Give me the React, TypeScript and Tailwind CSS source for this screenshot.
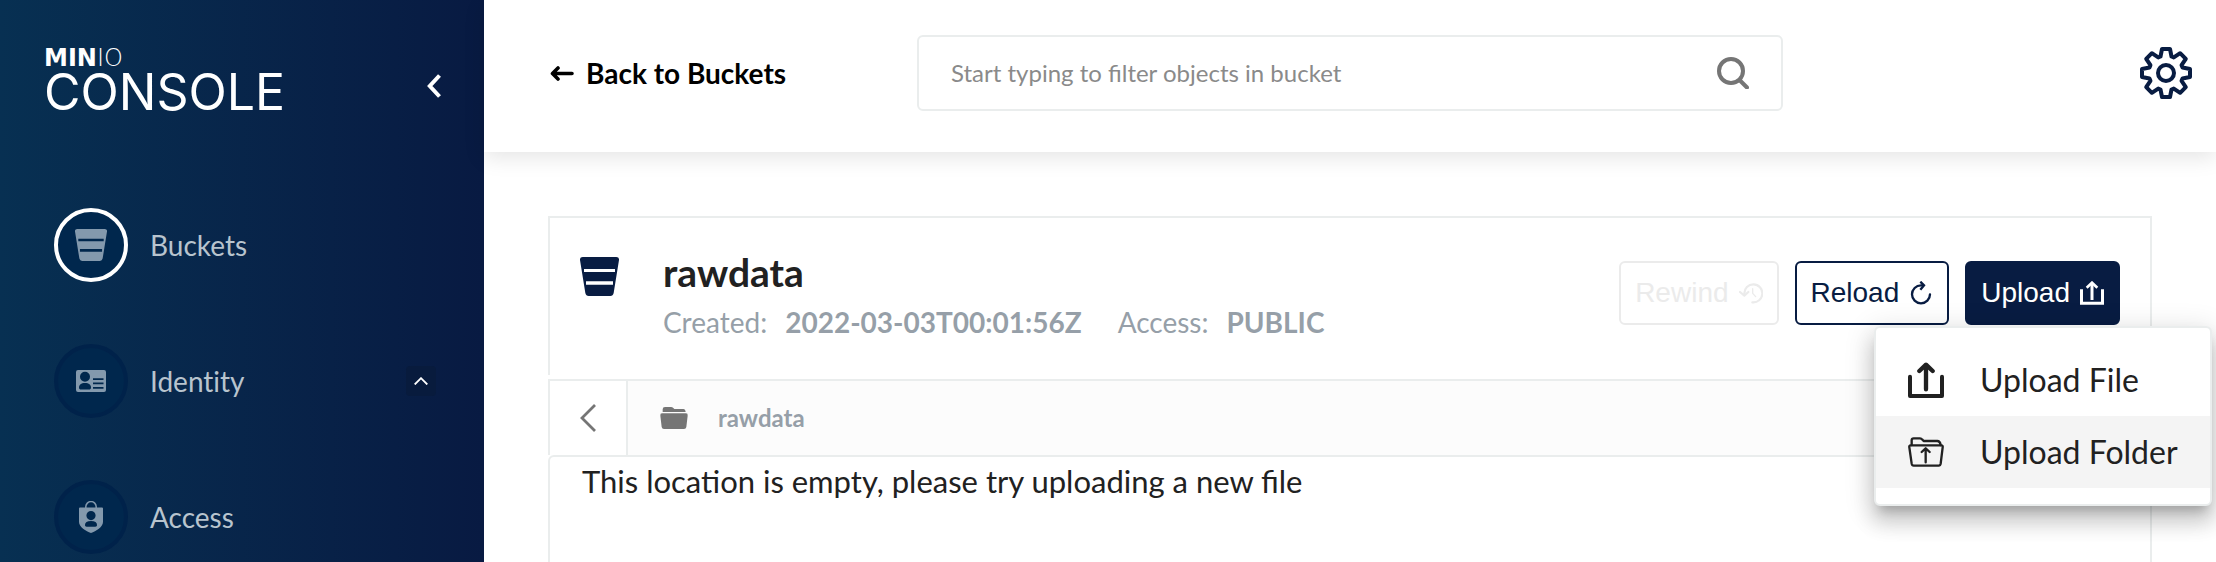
import React from "react";

type IconProps = { className: string };

function BucketIcon({ className }: IconProps) {
  return (
    <svg viewBox="0 0 117 117" className={`block shrink-0 ${className}`} fill="currentColor" aria-hidden="true">
      <path
        fillRule="evenodd"
        d="M8 0H109Q118 0 117 9L101 108Q99 117 91 117H26Q18 117 16 108L0 9Q-1 0 8 0ZM12 36V45H105V36ZM18 73V83H99V73Z"
      />
    </svg>
  );
}

function IdentityIcon({ className }: IconProps) {
  return (
    <svg viewBox="0 0 30 22" className={`block shrink-0 ${className}`} fill="currentColor" aria-hidden="true">
      <path
        fillRule="evenodd"
        d="M2 0h26a2 2 0 0 1 2 2v18a2 2 0 0 1-2 2H2a2 2 0 0 1-2-2V2a2 2 0 0 1 2-2zM9 1.800a5 5 0 1 0 0 10 5 5 0 0 0 0-10zM9 13c-4 0-6 2-6 4.500 0 1.500.8 2 2 2h8c1.200 0 2-.5 2-2C15 15 13 13 9 13zM17 8.300v1.700h10.500V8.300zM17 12.600v1.700h10.500v-1.700zM17 17v1.700h10.500V17z"
      />
    </svg>
  );
}

function AccessIcon({ className }: IconProps) {
  return (
    <svg viewBox="0 0 24 32" className={`block shrink-0 ${className}`} fill="currentColor" aria-hidden="true">
      <path
        fillRule="evenodd"
        d="M1 6.500h22a1 1 0 0 1 1 1V21c0 5-7 9-12 11C7 30 0 26 0 21V7.500a1 1 0 0 1 1-1zM12 10a4.600 4.600 0 1 0 0 9.200 4.600 4.600 0 0 0 0-9.200zM12 20c-4 0-6 1.600-6 4 0 1.300.6 1.700 1.700 1.700h8.600c1.100 0 1.700-.4 1.700-1.700 0-2.400-2-4-6-4z"
      />
      <path d="M6.800 7V5.800a5.200 5.200 0 0 1 10.400 0V7" fill="none" stroke="currentColor" strokeWidth="1.500" />
    </svg>
  );
}

const gearPoints = Array.from({ length: 8 }, (_, i) => {
  const a = (i * Math.PI) / 4;
  const tooth = [
    [-5.5, -16.5],
    [-4, -24],
    [4, -24],
    [5.5, -16.5],
  ];
  return tooth
    .map(([x, y]) => `${(26 + x * Math.cos(a) - y * Math.sin(a)).toFixed(2)},${(26 + x * Math.sin(a) + y * Math.cos(a)).toFixed(2)}`)
    .join(" ");
}).join(" ");

function GearIcon({ className }: IconProps) {
  return (
    <svg viewBox="0 0 52 52" className={`block ${className}`} fill="none" stroke="currentColor" strokeWidth="4" strokeLinejoin="round" aria-hidden="true">
      <circle cx="26" cy="26" r="8" />
      <polygon points={gearPoints} />
    </svg>
  );
}

function RewindIcon({ className }: IconProps) {
  return (
    <svg viewBox="0 0 72 72" className={`block shrink-0 ${className}`} fill="none" stroke="currentColor" strokeWidth="6.500" strokeLinecap="round" aria-hidden="true">
      <path d="M16 38A27 27 0 1 1 40 64" />
      <path d="M3 33 16 44 28 33" strokeLinejoin="round" />
      <path d="M41 23V37L50 47" strokeWidth="4" />
    </svg>
  );
}

function ReloadIcon({ className }: IconProps) {
  return (
    <svg viewBox="0 0 72 72" className={`block shrink-0 ${className}`} fill="none" stroke="currentColor" strokeWidth="7" aria-hidden="true">
      <path d="M42 13H36A27 27 0 1 0 63 40" strokeLinecap="round" />
      <path d="M34 2 45 13 34 26" />
    </svg>
  );
}

function UploadIcon({ className }: IconProps) {
  return (
    <svg viewBox="0 0 72 72" className={`block shrink-0 ${className}`} fill="none" stroke="currentColor" aria-hidden="true">
      <path d="M4.500 25V67H67.500V25" strokeWidth="9" />
      <path d="M36 57V6" strokeWidth="9" />
      <path d="M20 20 36 5 52 20" strokeWidth="8" />
    </svg>
  );
}

function UploadFileIcon({ className }: IconProps) {
  return (
    <svg viewBox="0 0 108 108" className={`block shrink-0 ${className}`} fill="none" stroke="currentColor" strokeWidth="12" strokeLinecap="round" strokeLinejoin="round" aria-hidden="true">
      <path d="M6 44V102H102V44" />
      <path d="M54 82V10M34 27 54 8 74 27" strokeWidth="13" />
    </svg>
  );
}

function UploadFolderIcon({ className }: IconProps) {
  return (
    <svg viewBox="0 0 108 90" className={`block shrink-0 ${className}`} fill="none" stroke="currentColor" strokeWidth="7" strokeLinecap="round" strokeLinejoin="round" aria-hidden="true">
      <path d="M11 24V10Q11 4 17 4H36Q40 4 43 8L47 12H88Q96 12 98 24" />
      <path d="M8 25H100Q105 25 104 31L98 80Q97 86 92 86H17Q12 86 11 80L4 31Q3 25 8 25Z" />
      <path d="M53 76V36M41 45 53 34 65 45" />
    </svg>
  );
}

function FolderIcon({ className }: IconProps) {
  return (
    <svg viewBox="0 0 84 66" className={`block shrink-0 ${className}`} fill="currentColor" aria-hidden="true">
      <path d="M8 15V7Q8 0 15 0H33Q37 0 40 3L43 6H70Q76 6 77 15Z" />
      <path d="M6 19H78Q84 19 83 26L79 60Q78 66 72 66H12Q6 66 5 60L1 26Q0 19 6 19Z" />
    </svg>
  );
}

type NavItemProps = { label: string; active?: boolean; open?: boolean; children: React.ReactNode };

function NavItem({ label, active, open, children }: NavItemProps) {
  return (
    <li>
      <a href="#" className="flex items-center">
        <span
          className={
            active
              ? "flex size-[74px] shrink-0 items-center justify-center rounded-full border-4 border-white bg-[#00274d] text-[#8399ad]"
              : "flex size-[74px] shrink-0 items-center justify-center rounded-full border-4 border-[#00224a] bg-[#00274d] text-[#8399ad]"
          }
        >
          {children}
        </span>
        <span className="ml-[22px] text-[28px] leading-9 text-[#b8c4ce] [font-variant-ligatures:none]">{label}</span>
        {open && (
          <span className="ml-auto flex size-[30px] items-center justify-center rounded bg-[#081b3d] text-white">
            <svg viewBox="0 0 14 8" className="h-2 w-3.5" fill="none" stroke="currentColor" strokeWidth="1.800" aria-hidden="true">
              <path d="M.7 7.500 7 1.200l6.300 6.300" />
            </svg>
          </span>
        )}
      </a>
    </li>
  );
}

export default function App() {
  return (
    <div className="flex h-screen overflow-hidden bg-white font-['Lato',sans-serif] text-[#212121]">
      <aside className="flex w-[484px] shrink-0 flex-col bg-linear-to-r from-[#073052] to-[#081a42]">
        <div className="flex items-start justify-between pt-11 pr-[43px] pl-11 text-white">
          <div>
            <div className="font-['DejaVu_Sans',sans-serif] text-2xl leading-7">
              <span className="font-bold">MIN</span>
              <span className="font-extralight">IO</span>
            </div>
            <div className="font-['Inter',sans-serif] text-[50px] leading-10">CONSOLE</div>
          </div>
          <button type="button" aria-label="Collapse menu" className="mt-[30px]">
            <svg viewBox="0 0 14 24" className="h-6 w-3.5" fill="none" stroke="currentColor" strokeWidth="4" aria-hidden="true">
              <path d="M12.500 1.500 2.800 12l9.700 10.500" />
            </svg>
          </button>
        </div>
        <nav className="pt-24 pr-12 pl-[54px]">
          <ul className="flex flex-col gap-[62px]">
            <NavItem label="Buckets" active>
              <BucketIcon className="size-8" />
            </NavItem>
            <NavItem label="Identity" open>
              <IdentityIcon className="h-[22px] w-[30px]" />
            </NavItem>
            <NavItem label="Access">
              <AccessIcon className="h-8 w-6" />
            </NavItem>
          </ul>
        </nav>
      </aside>

      <main className="flex min-w-0 flex-1 flex-col">
        <header className="grid shrink-0 grid-cols-[1fr_minmax(0,866px)_1fr] items-center pt-[35px] pb-[41px] shadow-[0_6px_20px_rgba(0,0,0,0.1)]">
          <a href="#" className="flex items-center gap-3 pl-[66px] text-[28px] leading-10 font-bold text-black">
            <svg viewBox="0 0 24 15" className="h-[15px] w-6 shrink-0" fill="none" stroke="currentColor" strokeWidth="3.600" strokeLinecap="round" strokeLinejoin="round" aria-hidden="true">
              <path d="M22 7.500H3M8 2 2.500 7.500 8 13" />
            </svg>
            Back to Buckets
          </a>
          <label className="flex h-[76px] items-center rounded-md border-2 border-[#eaeded] px-8">
            <input
              type="text"
              aria-label="Filter objects"
              placeholder="Start typing to filter objects in bucket"
              className="min-w-0 flex-1 text-2xl leading-8 text-black outline-none placeholder:text-[#8a8a8a]"
            />
            <svg viewBox="0 0 32 32" className="size-8 shrink-0 text-[#757575]" fill="none" stroke="currentColor" strokeWidth="4" strokeLinecap="round" aria-hidden="true">
              <circle cx="14" cy="14" r="12" />
              <path d="m23 23.500 7 7" />
            </svg>
          </label>
          <button type="button" aria-label="Settings" className="mr-6 justify-self-end text-[#081c42]">
            <GearIcon className="size-[52px]" />
          </button>
        </header>

        <section className="flex min-h-0 flex-1 flex-col px-16 pt-16">
          <div className="mb-1 flex h-[159px] shrink-0 items-start justify-between border-2 border-b-0 border-[#eaeded] px-[30px] pt-[35px]">
            <div className="flex items-start">
              <BucketIcon className="mt-1 size-[39px] text-[#081c42]" />
              <div className="ml-11">
                <h1 className="text-[39px] leading-[38px] font-bold">rawdata</h1>
                <p className="flex items-center pt-[13px] text-[28px] leading-9 text-[#969fa8]">
                  Created: <strong className="ml-[18px]">2022-03-03T00:01:56Z</strong>
                  <span className="ml-9">Access:</span> <strong className="ml-[18px]">PUBLIC</strong>
                </p>
              </div>
            </div>
            <div className="flex items-center gap-4 pt-2 font-['Liberation_Sans',sans-serif] text-[28px]">
              <button type="button" disabled className="flex h-16 items-center gap-2.5 rounded-md border-2 border-[#ebebeb] px-3.5 text-[#ebebeb]">
                Rewind
                <RewindIcon className="size-6" />
              </button>
              <button type="button" className="flex h-16 items-center gap-2.5 rounded-md border-2 border-[#081c42] px-3.5 text-[#081c42]">
                Reload
                <ReloadIcon className="size-6" />
              </button>
              <div className="relative">
                <button
                  type="button"
                  aria-haspopup="menu"
                  aria-expanded="true"
                  className="flex h-16 items-center gap-2.5 rounded-md border-2 border-[#081c42] bg-[#081c42] px-3.5 text-white"
                >
                  Upload
                  <UploadIcon className="size-6" />
                </button>
                <div
                  role="menu"
                  className="absolute top-full -right-[92px] mt-px w-[338px] rounded-md border-2 border-[#eaeded] bg-white py-4 font-['Lato',sans-serif] text-[32px] leading-10 shadow-[0_10px_10px_-6px_rgba(0,0,0,0.2),0_16px_20px_2px_rgba(0,0,0,0.14),0_6px_28px_4px_rgba(0,0,0,0.12)]"
                >
                  <button type="button" role="menuitem" className="flex h-[72px] w-full items-center gap-9 pl-8">
                    <UploadFileIcon className="size-9" />
                    Upload File
                  </button>
                  <button type="button" role="menuitem" className="flex h-[72px] w-full items-center gap-9 bg-[#f4f4f4] pl-8">
                    <UploadFolderIcon className="h-[30px] w-9" />
                    Upload Folder
                  </button>
                </div>
              </div>
            </div>
          </div>

          <div className="flex h-[76px] shrink-0 border-2 border-b-0 border-[#eaeded] bg-[#fcfcfc]">
            <button type="button" aria-label="Go back" className="flex w-[78px] items-center border-r-2 border-[#eaeded] bg-white pl-[30px] text-[#757575]">
              <svg viewBox="0 0 16 28" className="h-7 w-4" fill="none" stroke="currentColor" strokeWidth="2.800" aria-hidden="true">
                <path d="M15 1 2 14l13 13" />
              </svg>
            </button>
            <div className="flex items-center gap-[30px] pl-8">
              <FolderIcon className="h-[22px] w-7 text-[#757575]" />
              <a href="#" className="text-2xl leading-8 font-bold text-[#969fa8]">
                rawdata
              </a>
            </div>
          </div>

          <div className="min-h-0 flex-1 rounded-t-md border-2 border-b-0 border-[#eaeded] px-8 pt-1">
            <p className="text-[31px] leading-10">This location is empty, please try uploading a new file</p>
          </div>
        </section>
      </main>
    </div>
  );
}
